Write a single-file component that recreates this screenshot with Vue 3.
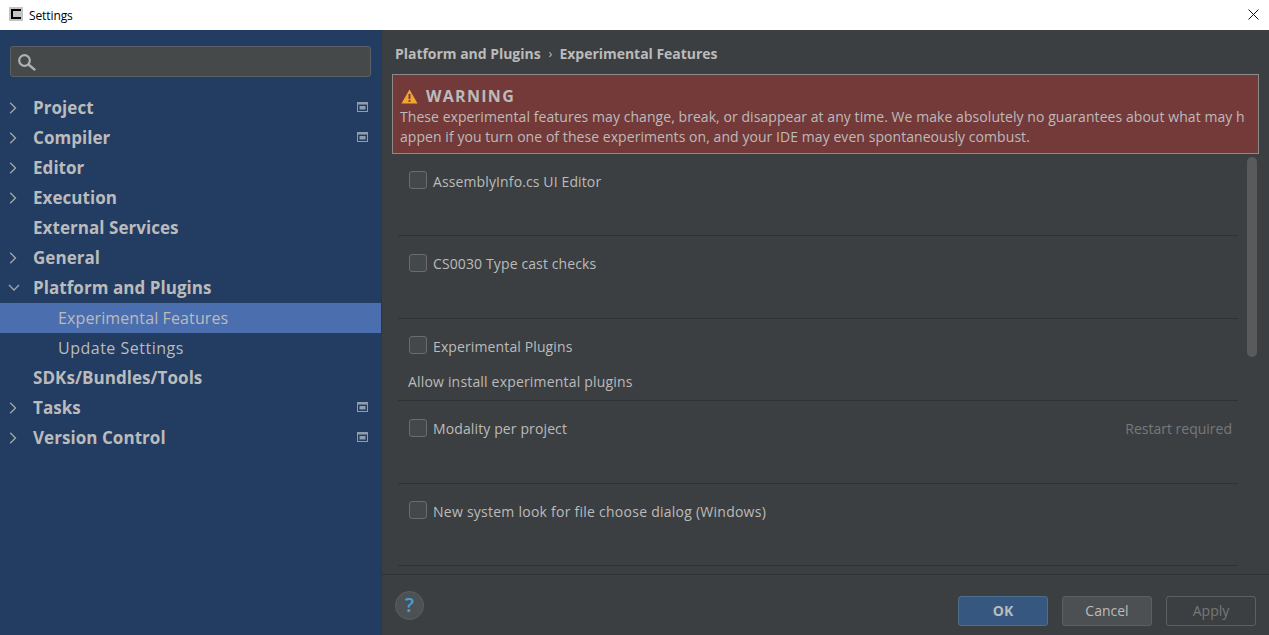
<script setup>
const tree = [
  { label: 'Project', arrow: 'right', badge: true },
  { label: 'Compiler', arrow: 'right', badge: true },
  { label: 'Editor', arrow: 'right' },
  { label: 'Execution', arrow: 'right' },
  { label: 'External Services' },
  { label: 'General', arrow: 'right' },
  { label: 'Platform and Plugins', arrow: 'down' },
  { label: 'Experimental Features', child: true, selected: true },
  { label: 'Update Settings', child: true, wide: true },
  { label: 'SDKs/Bundles/Tools' },
  { label: 'Tasks', arrow: 'right', badge: true },
  { label: 'Version Control', arrow: 'right', badge: true }
]
const options = [
  { label: 'AssemblyInfo.cs UI Editor' },
  { label: 'CS0030 Type cast checks' },
  { label: 'Experimental Plugins', note: 'Allow install experimental plugins' },
  { label: 'Modality per project', hint: 'Restart required' },
  { label: 'New system look for file choose dialog (Windows)', wide: true }
]
</script>

<template>
  <div class="window">
    <header class="titlebar">
      <svg class="app-icon" width="14" height="14" viewBox="0 0 14 14">
        <rect width="14" height="14" fill="#c4c4c4" />
        <path d="M2 2h10v2H4v6h8v2H2z" fill="#000" />
      </svg>
      <span class="title">Settings</span>
      <svg class="close" width="11" height="11" viewBox="0 0 11 11">
        <path d="M.5.5l10 10M10.5.5l-10 10" stroke="#111" stroke-width="1" fill="none" />
      </svg>
    </header>
    <div class="body">
      <aside class="sidebar">
        <div class="search">
          <svg width="20" height="20" viewBox="0 0 20 20">
            <circle cx="6.5" cy="8.5" r="5.3" fill="none" stroke="#afb1b3" stroke-width="2.2" />
            <path d="M10.5 12.5l6.7 5.7" stroke="#afb1b3" stroke-width="2.4" fill="none" />
          </svg>
        </div>
        <nav class="tree">
          <div
            v-for="item in tree"
            :key="item.label"
            class="row"
            :class="{ child: item.child, selected: item.selected, wide: item.wide }"
          >
            <svg v-if="item.arrow === 'right'" class="arrow" width="10" height="12" viewBox="0 0 10 12">
              <path d="M.7.8l5.3 5.2-5.3 5.2" fill="none" stroke="#a4a8ab" stroke-width="1.3" transform="translate(1.5 0)" />
            </svg>
            <svg v-else-if="item.arrow === 'down'" class="arrow" width="12" height="10" viewBox="0 0 12 10">
              <path d="M1 3l5 5 5-5" fill="none" stroke="#a4a8ab" stroke-width="1.3" />
            </svg>
            <span class="label">{{ item.label }}</span>
            <svg v-if="item.badge" class="badge" width="11" height="10" viewBox="0 0 11 10">
              <rect x=".5" y=".5" width="10" height="9" fill="none" stroke="#8e9cad" />
              <rect x="1" y="1" width="9" height="1.6" fill="#8e9cad" />
              <rect x="2.5" y="4" width="6" height="3.5" fill="#8e9cad" />
            </svg>
          </div>
        </nav>
      </aside>
      <main class="content">
        <div class="breadcrumb">
          <span>Platform and Plugins</span>
          <span class="sep">›</span>
          <span>Experimental Features</span>
        </div>
        <section class="warning">
          <div class="warning-head">
            <svg width="17" height="15" viewBox="0 0 18 16">
              <path d="M9 .5L17.6 15.5H.4z" fill="#f2a62e" />
              <rect x="8" y="5.2" width="2" height="5.6" fill="#6f3a3a" />
              <rect x="8" y="11.8" width="2" height="2" fill="#6f3a3a" />
            </svg>
            <span>WARNING</span>
          </div>
          <p>These experimental features may change, break, or disappear at any time. We make absolutely no guarantees about what may h<br />appen if you turn one of these experiments on, and your IDE may even spontaneously combust.</p>
        </section>
        <div class="list-wrap">
          <div class="list">
            <div v-for="opt in options" :key="opt.label" class="option" :class="{ wide: opt.wide }">
              <div class="option-main">
                <span class="checkbox"></span>
                <span>{{ opt.label }}</span>
                <span v-if="opt.hint" class="hint">{{ opt.hint }}</span>
              </div>
              <div v-if="opt.note" class="note">{{ opt.note }}</div>
            </div>
          </div>
          <div class="scrollbar"></div>
        </div>
        <footer class="footer">
          <span class="help">?</span>
          <div class="buttons">
            <button class="btn primary">OK</button>
            <button class="btn">Cancel</button>
            <button class="btn disabled">Apply</button>
          </div>
        </footer>
      </main>
    </div>
  </div>
</template>

<style>
html, body { margin: 0; background: #3c3f41; overflow: hidden; }
</style>

<style scoped>
.window {
  width: 1269px;
  height: 635px;
  display: flex;
  flex-direction: column;
  font-family: "Open Sans", "Noto Sans", sans-serif;
  color: #bbbbbb;
  overflow: hidden;
}
.titlebar {
  height: 30px;
  flex: none;
  background: #fff;
  display: flex;
  align-items: center;
  padding: 0 10px 0 9px;
  color: #000;
}
.app-icon { flex: none; margin-top: -2px; }
.title { font-size: 12px; margin-left: 6px; letter-spacing: -0.1px; }
.close { margin-left: auto; margin-top: -2px; }
.body { flex: 1; display: flex; min-height: 0; }
.sidebar {
  width: 381px;
  flex: none;
  background: #233c62;
  border-right: 1px solid #333638;
  padding-top: 16px;
}
.search {
  margin: 0 10px;
  height: 29px;
  background: #45494a;
  border: 1px solid #5b6064;
  border-radius: 3px;
  display: flex;
  align-items: center;
  padding-left: 7px;
}
.tree { margin-top: 16px; }
.row {
  height: 30px;
  box-sizing: border-box;
  padding-bottom: 1px;
  display: flex;
  align-items: center;
  position: relative;
  padding-left: 33px;
  font-size: 17px;
  font-weight: 700;
  letter-spacing: 0.05px;
}
.row.child {
  padding-left: 58px;
  padding-bottom: 0;
  font-weight: 400;
  font-size: 16px;
  letter-spacing: 0.12px;
}
.row.child.wide { letter-spacing: 0.5px; }
.row.selected { background: #4b6eaf; }
.arrow { position: absolute; left: 8px; top: 9px; }
.badge { position: absolute; left: 357px; top: 9px; }
.content {
  flex: 1;
  min-width: 0;
  background: #3c3f41;
  display: flex;
  flex-direction: column;
}
.breadcrumb {
  height: 44px;
  flex: none;
  display: flex;
  align-items: center;
  padding: 2px 0 0 13px;
  box-sizing: border-box;
  font-size: 14px;
  font-weight: 700;
  letter-spacing: -0.03px;
}
.sep { margin: 0 7px 0 8px; font-weight: 400; font-size: 13px; }
.warning {
  margin: 0 10px;
  height: 80px;
  box-sizing: border-box;
  flex: none;
  background: #743a3a;
  border: 1px solid #8a8a8a;
  padding: 11px 7px 0;
  font-size: 14px;
  letter-spacing: 0.06px;
}
.warning-head {
  display: flex;
  align-items: center;
  gap: 8px;
  height: 20px;
  padding-left: 1px;
  font-size: 16px;
  font-weight: 700;
  letter-spacing: 1.3px;
}
.warning p { margin: 0; padding-top: 0.5px; line-height: 20.5px; }
.list-wrap { position: relative; flex: 1; min-height: 0; overflow: hidden; padding: 0 31px 0 16px; }
.list { margin-top: -0.5px; }
.option {
  height: 82.5px;
  box-sizing: border-box;
  border-bottom: 1px solid #323232;
  font-size: 14px;
  letter-spacing: 0.12px;
  padding: 0 6px 0 10px;
}
.option.wide { letter-spacing: 0.25px; }
.option-main { height: 57px; padding-top: 18px; box-sizing: border-box; display: flex; align-items: flex-start; line-height: 20px; }
.checkbox {
  width: 16px;
  height: 16px;
  margin: -0.5px 6px 0 1px;
  flex: none;
  background: #43494a;
  border: 1px solid #6b6b6b;
  border-radius: 3px;
}
.hint { margin-left: auto; color: #787878; letter-spacing: 0; }
.note { margin-top: -4px; line-height: 19px; letter-spacing: 0.18px; }
.scrollbar {
  position: absolute;
  right: 12px;
  top: 3px;
  width: 10px;
  height: 200px;
  border-radius: 5px;
  background: #585a5c;
}
.footer {
  height: 61px;
  flex: none;
  box-sizing: border-box;
  border-top: 1px solid #323232;
  display: flex;
  align-items: center;
  padding: 0 13px;
}
.help {
  width: 29px;
  height: 29px;
  box-sizing: border-box;
  border-radius: 50%;
  background: #4b5155;
  border: 1px solid #5a5f63;
  color: #46a0d4;
  font-weight: 600;
  font-size: 20px;
  text-align: center;
  line-height: 26px;
}
.buttons { margin-left: auto; display: flex; gap: 14px; padding-top: 11px; }
.btn {
  width: 90px;
  height: 30px;
  box-sizing: border-box;
  font: 14px "Open Sans", "Noto Sans", sans-serif;
  color: #bbbbbb;
  background: #4c5052;
  border: 1px solid #5e6060;
  border-radius: 3px;
  padding: 0;
}
.btn.primary { background: #365880; border-color: #4c708c; font-weight: 700; }
.btn.disabled { background: transparent; border-color: #5e6060; color: #777777; }
</style>
